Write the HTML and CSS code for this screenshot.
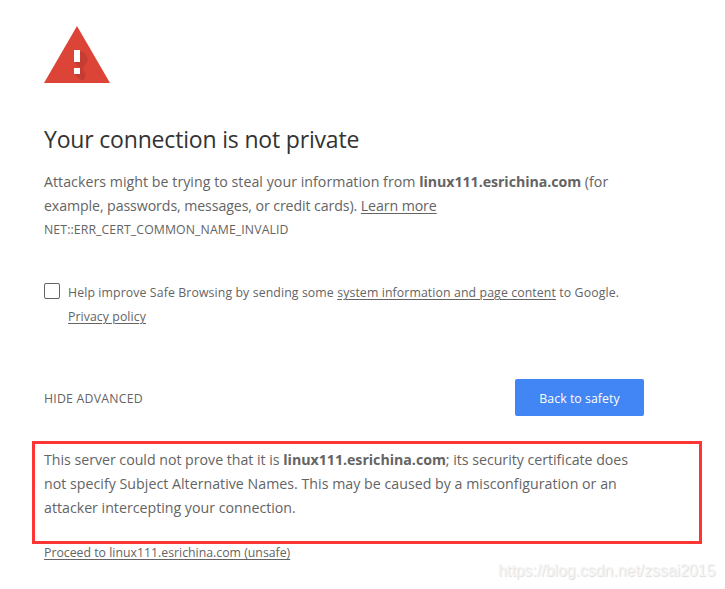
FILE: index.html
```html
<!DOCTYPE html>
<html lang="en">
<head>
<meta charset="utf-8">
<title>Privacy error</title>
<link rel="stylesheet" href="styles.css">
</head>
<body>
<main class="interstitial">
  <svg class="icon" width="66" height="57" viewBox="0 0 66 57" aria-hidden="true">
    <path fill="#db4437" d="M33 0 66 57H0z"/>
    <path fill="#c53d32" d="M36 25l4 1 4 7-2 5-3 4 1 4 2 2-2 6h-3l-7-6 6-5v-1l-6-6z"/>
    <path fill="#fff" d="M30 24h6v12h-6zM30 42h6v6h-6z"/>
  </svg>
  <h1><span class="t-title">Your connection is not private</span></h1>
  <p class="body"><span class="t-a1">Attackers might be trying to steal your information from <b>linux111.esrichina.com</b> (for</span><br><span class="t-a2">example, passwords, messages, or credit cards). <a>Learn more</a></span></p>
  <div class="code"><span class="t-code">NET::ERR_CERT_COMMON_NAME_INVALID</span></div>
  <div class="optin">
    <span class="checkbox"></span>
    <div class="small"><span class="t-help">Help improve Safe Browsing by sending some <a>system information and page content</a> to Google.</span><br><a class="t-policy">Privacy policy</a></div>
  </div>
  <div class="actions">
    <span class="small t-hide">HIDE ADVANCED</span>
    <button><span class="t-back">Back to safety</span></button>
  </div>
  <p class="body details"><span class="t-d1">This server could not prove that it is <b>linux111.esrichina.com</b>; its security certificate does</span><br><span class="t-d2">not specify Subject Alternative Names. This may be caused by a misconfiguration or an</span><br><span class="t-d3">attacker intercepting your connection.</span></p>
  <div class="small proceed"><a class="t-proceed">Proceed to linux111.esrichina.com (unsafe)</a></div>
</main>
<div class="highlight"></div>
<div class="watermark">https://blog.csdn.net/zssai2015</div>
</body>
</html>
```
FILE: styles.css
```css
* { box-sizing: border-box; }
body {
  margin: 0;
  height: 589px;
  overflow: hidden;
  position: relative;
  background: #fff;
  color: #646464;
  font-family: "Open Sans", "Noto Sans", sans-serif;
}
.interstitial { width: 600px; margin-left: 44px; padding-top: 26px; white-space: nowrap; }
.icon { display: block; }
h1 { margin: 40px 0 15px; font-size: 23px; line-height: 32px; font-weight: 400; color: #333; }
.body { margin: 0; font-size: 14.2px; line-height: 24px; }
.code, .small { font-size: 12.3px; line-height: 24px; }
a { text-decoration: underline; text-underline-offset: 2px; text-decoration-thickness: 1px; }
.t-title { letter-spacing: -.18px; }
.t-a1 { letter-spacing: .035px; }
.t-a1 b { letter-spacing: -.05px; }
.t-a2 { letter-spacing: -.1px; }
.t-code { letter-spacing: .09px; }
.t-help { letter-spacing: .108px; }
.t-policy { letter-spacing: .07px; }
.t-hide { letter-spacing: .22px; }
.t-back { letter-spacing: .06px; }
.t-d1 { letter-spacing: -.02px; }
.t-d2 { letter-spacing: .02px; }
.optin { display: flex; gap: 8px; margin-top: 39px; }
.checkbox { width: 16px; height: 16px; margin-top: 2px; border: 1px solid #646464; border-radius: 2px; }
.actions { display: flex; justify-content: space-between; align-items: center; height: 37px; margin-top: 50px; }
.t-hide { padding-top: 2px; }
button {
  width: 129px; height: 37px; padding: 2px 0 0; border: 0; border-radius: 2px;
  background: #4285f4; color: #fff; font: 12.3px "Open Sans", sans-serif;
}
.details { margin-top: 32px; }
.proceed { margin-top: 21px; }
.highlight { position: absolute; left: 32px; top: 441px; width: 670px; height: 103px; border: 3px solid #fc3535; }
.watermark {
  position: absolute; left: 498px; top: 561px; font: 16px/20px "Liberation Sans", sans-serif;
  letter-spacing: -.08px; color: #f4f4f4; text-shadow: 1px 1px 1px #ddd; white-space: nowrap;
}
```
